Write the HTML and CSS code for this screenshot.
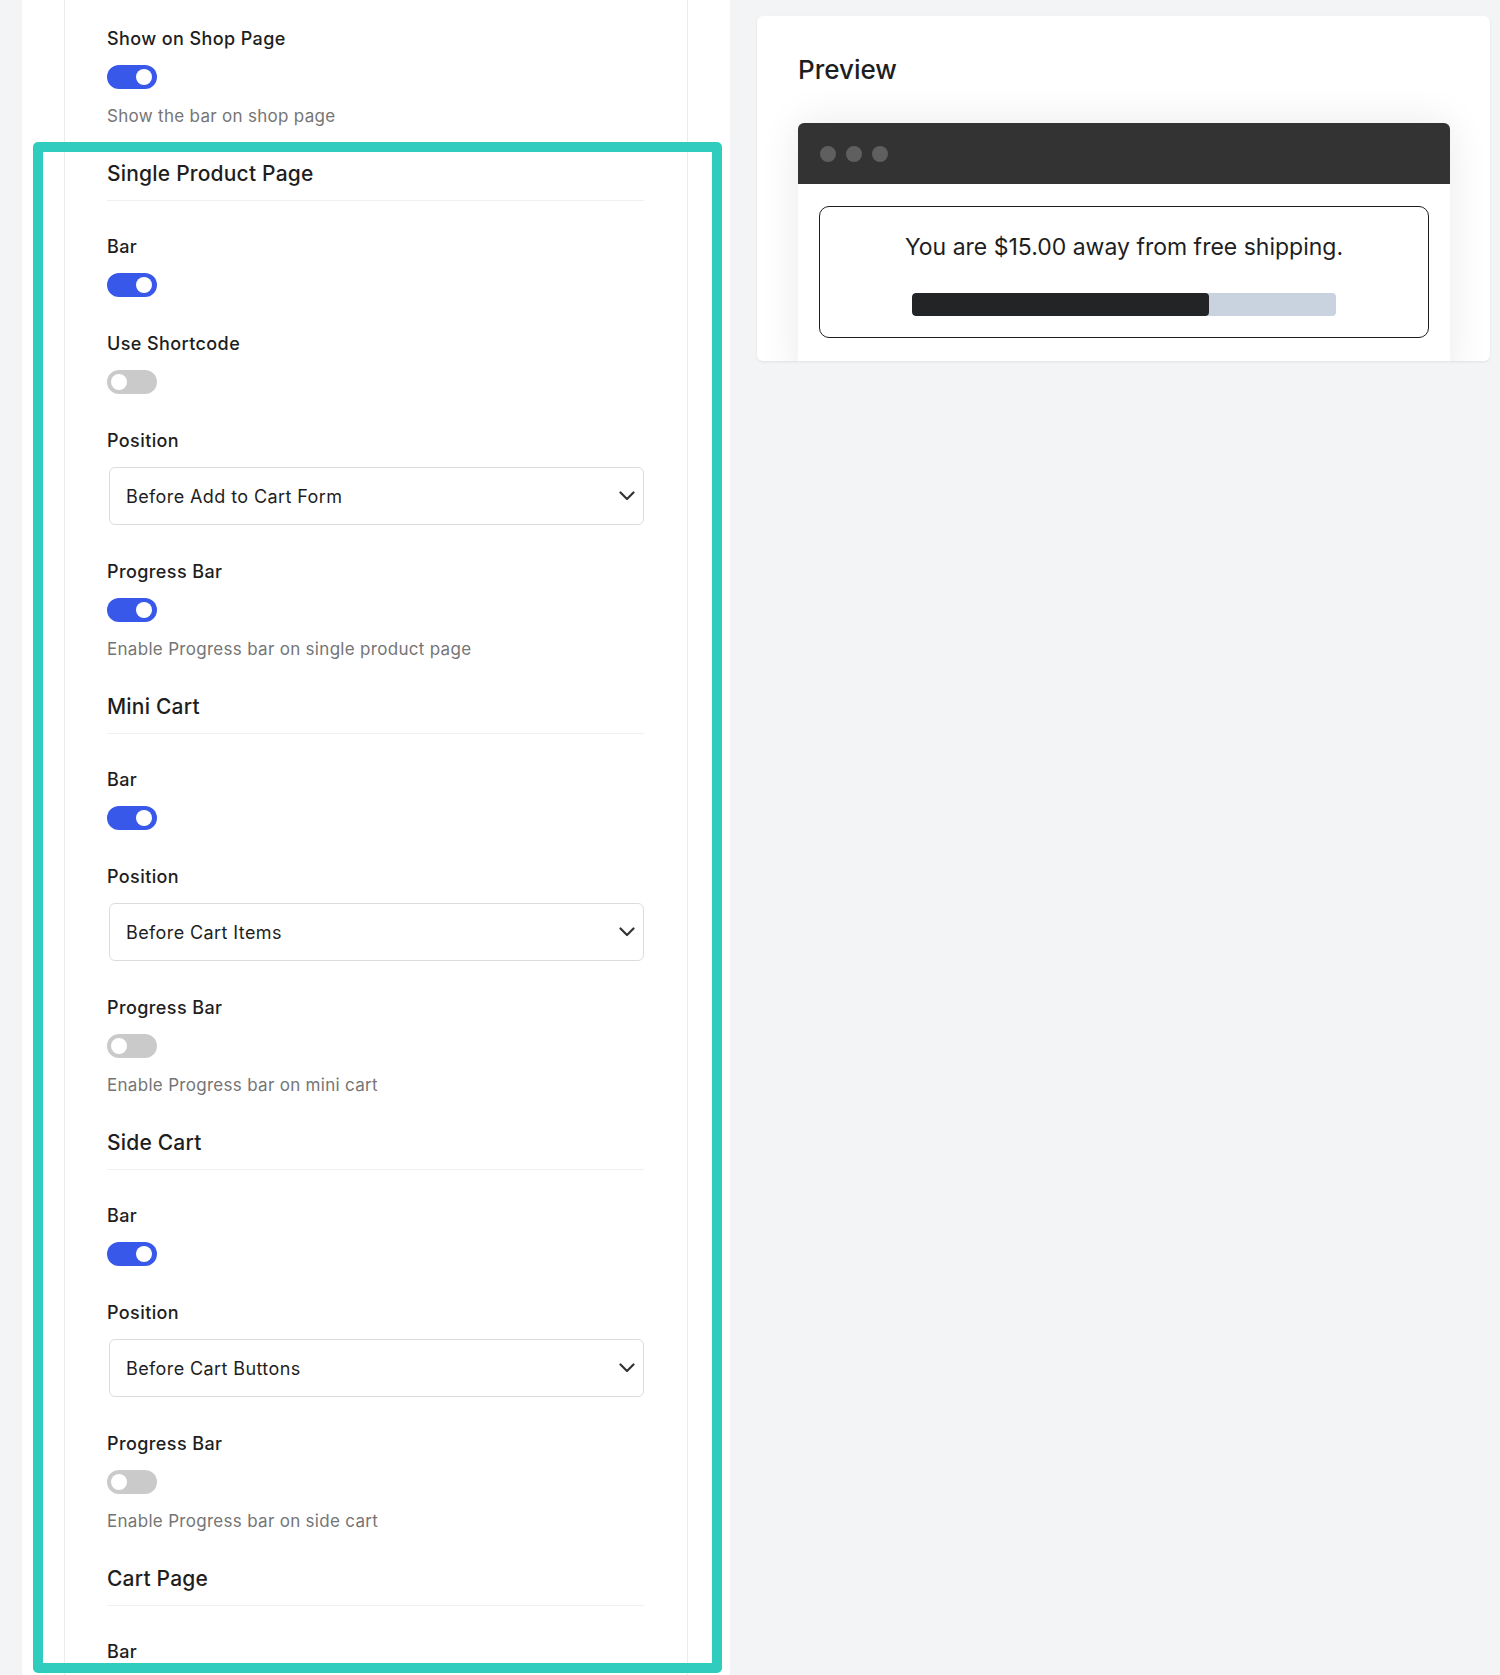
FILE: index.html
```html
<!DOCTYPE html>
<html lang="en">
<head>
<meta charset="utf-8">
<title>Free Shipping Bar Settings</title>
<link rel="stylesheet" href="styles.css">
</head>
<body>
<div class="page">
  <div class="settings-card">
    <div class="settings-inner">
      <div class="field">
        <div class="label">Show on Shop Page</div>
        <span class="toggle on"></span>
        <div class="help">Show the bar on shop page</div>
      </div>

      <div class="section">
        <h3 class="section-title">Single Product Page</h3>
        <div class="field">
          <div class="label">Bar</div>
          <span class="toggle on"></span>
        </div>
        <div class="field">
          <div class="label">Use Shortcode</div>
          <span class="toggle"></span>
        </div>
        <div class="field">
          <div class="label">Position</div>
          <div class="select">
            <span>Before Add to Cart Form</span>
            <svg class="chevron" width="16" height="10" viewBox="0 0 16 10"><path d="M1.5 1.5 L8 8 L14.5 1.5" fill="none" stroke="#333" stroke-width="2.2" stroke-linecap="round" stroke-linejoin="round"/></svg>
          </div>
        </div>
        <div class="field">
          <div class="label">Progress Bar</div>
          <span class="toggle on"></span>
          <div class="help">Enable Progress bar on single product page</div>
        </div>
      </div>

      <div class="section">
        <h3 class="section-title">Mini Cart</h3>
        <div class="field">
          <div class="label">Bar</div>
          <span class="toggle on"></span>
        </div>
        <div class="field">
          <div class="label">Position</div>
          <div class="select">
            <span>Before Cart Items</span>
            <svg class="chevron" width="16" height="10" viewBox="0 0 16 10"><path d="M1.5 1.5 L8 8 L14.5 1.5" fill="none" stroke="#333" stroke-width="2.2" stroke-linecap="round" stroke-linejoin="round"/></svg>
          </div>
        </div>
        <div class="field">
          <div class="label">Progress Bar</div>
          <span class="toggle"></span>
          <div class="help">Enable Progress bar on mini cart</div>
        </div>
      </div>

      <div class="section">
        <h3 class="section-title">Side Cart</h3>
        <div class="field">
          <div class="label">Bar</div>
          <span class="toggle on"></span>
        </div>
        <div class="field">
          <div class="label">Position</div>
          <div class="select">
            <span>Before Cart Buttons</span>
            <svg class="chevron" width="16" height="10" viewBox="0 0 16 10"><path d="M1.5 1.5 L8 8 L14.5 1.5" fill="none" stroke="#333" stroke-width="2.2" stroke-linecap="round" stroke-linejoin="round"/></svg>
          </div>
        </div>
        <div class="field">
          <div class="label">Progress Bar</div>
          <span class="toggle"></span>
          <div class="help">Enable Progress bar on side cart</div>
        </div>
      </div>

      <div class="section">
        <h3 class="section-title">Cart Page</h3>
        <div class="field">
          <div class="label">Bar</div>
          <span class="toggle on"></span>
        </div>
      </div>
    </div>
  </div>

  <div class="preview-card">
    <h2 class="preview-title">Preview</h2>
    <div class="mock-browser">
      <div class="mock-bar">
        <span class="dot"></span><span class="dot"></span><span class="dot"></span>
      </div>
      <div class="mock-body">
        <div class="notice">
          <p class="notice-text">You are $15.00 away from free shipping.</p>
          <div class="progress"><div class="progress-fill" style="width: 70%"></div></div>
        </div>
      </div>
    </div>
  </div>

  <div class="highlight"></div>
</div>
</body>
</html>
```

FILE: styles.css
```css
* { box-sizing: border-box; }

html, body {
  margin: 0;
  padding: 0;
}

body {
  background: #f3f4f6;
  font-family: Inter, "Noto Sans", "Liberation Sans", sans-serif;
  color: #1e1e1e;
  height: 1675px;
  overflow: hidden;
}

.page {
  position: relative;
  display: flex;
  align-items: flex-start;
  gap: 27px;
  padding-left: 22px;
  height: 1675px;
}

.settings-card {
  width: 708px;
  flex: none;
  background: #fff;
  padding: 0 42px;
  min-height: 1675px;
}

.settings-inner {
  border-left: 1px solid #ececec;
  border-right: 1px solid #ececec;
  padding: 26px 43px 0 42px;
  min-height: 1675px;
}

.field + .field {
  margin-top: 34px;
}

.label {
  font-size: 18px;
  line-height: 26px;
  font-weight: 500;
  letter-spacing: 0.4px;
  margin-bottom: 13px;
  color: #1e1e1e;
}

.toggle {
  display: block;
  position: relative;
  width: 50px;
  height: 24px;
  border-radius: 12px;
  background: #cacaca;
}

.toggle::after {
  content: "";
  position: absolute;
  top: 4px;
  left: 4px;
  width: 16px;
  height: 16px;
  border-radius: 50%;
  background: #fff;
}

.toggle.on {
  background: #3858e9;
}

.toggle.on::after {
  left: 29px;
}

.help {
  margin-top: 14px;
  font-size: 17px;
  line-height: 26px;
  letter-spacing: 0.3px;
  color: #757575;
}

.section {
  margin-top: 30px;
}

.section-title {
  margin: 0 0 33px;
  font-size: 21px;
  line-height: 30px;
  font-weight: 500;
  letter-spacing: 0.2px;
  padding-bottom: 11px;
  border-bottom: 1px solid #f0f0f0;
  color: #1e1e1e;
}

.select {
  margin: 2px 0 0 2px;
  height: 58px;
  border: 1px solid #dcdcde;
  border-radius: 6px;
  display: flex;
  align-items: center;
  justify-content: space-between;
  padding: 0 8px 0 16px;
  font-size: 18px;
  letter-spacing: 0.4px;
  color: #1e1e1e;
}

.chevron {
  display: block;
}

.preview-card {
  margin-top: 16px;
  width: 733px;
  height: 345px;
  flex: none;
  background: #fff;
  border-radius: 6px;
  box-shadow: 0 1px 3px rgba(0, 0, 0, 0.08);
  padding: 0 40px 0 41px;
  overflow: hidden;
}

.preview-title {
  margin: 0;
  padding-top: 37px;
  font-size: 26px;
  line-height: 34px;
  font-weight: 500;
  color: #1e1e1e;
  margin-bottom: 36px;
}

.mock-browser {
  border-radius: 6px 6px 0 0;
  box-shadow: 0 0 40px rgba(0, 0, 0, 0.09);
  background: #fff;
}

.mock-bar {
  height: 61px;
  background: #333;
  border-radius: 6px 6px 0 0;
  display: flex;
  align-items: center;
  gap: 10px;
  padding-left: 22px;
}

.dot {
  width: 16px;
  height: 16px;
  border-radius: 50%;
  background: #5f5f5f;
}

.mock-body {
  padding: 22px 21px 40px;
}

.notice {
  border: 1px solid #1e1e1e;
  border-radius: 10px;
  padding: 22px 0 21px;
  display: flex;
  flex-direction: column;
  align-items: center;
}

.notice-text {
  margin: 0;
  font-size: 23px;
  line-height: 36px;
  color: #1e1e1e;
}

.progress {
  margin-top: 28px;
  width: 424px;
  height: 23px;
  background: #c8d3df;
  border-radius: 4px;
  overflow: hidden;
}

.progress-fill {
  height: 100%;
  background: #222425;
  border-radius: 4px;
}

.highlight {
  position: absolute;
  left: 33px;
  top: 142px;
  width: 689px;
  height: 1531px;
  border: 10px solid #30cdbf;
  border-radius: 5px;
  pointer-events: none;
}
```
